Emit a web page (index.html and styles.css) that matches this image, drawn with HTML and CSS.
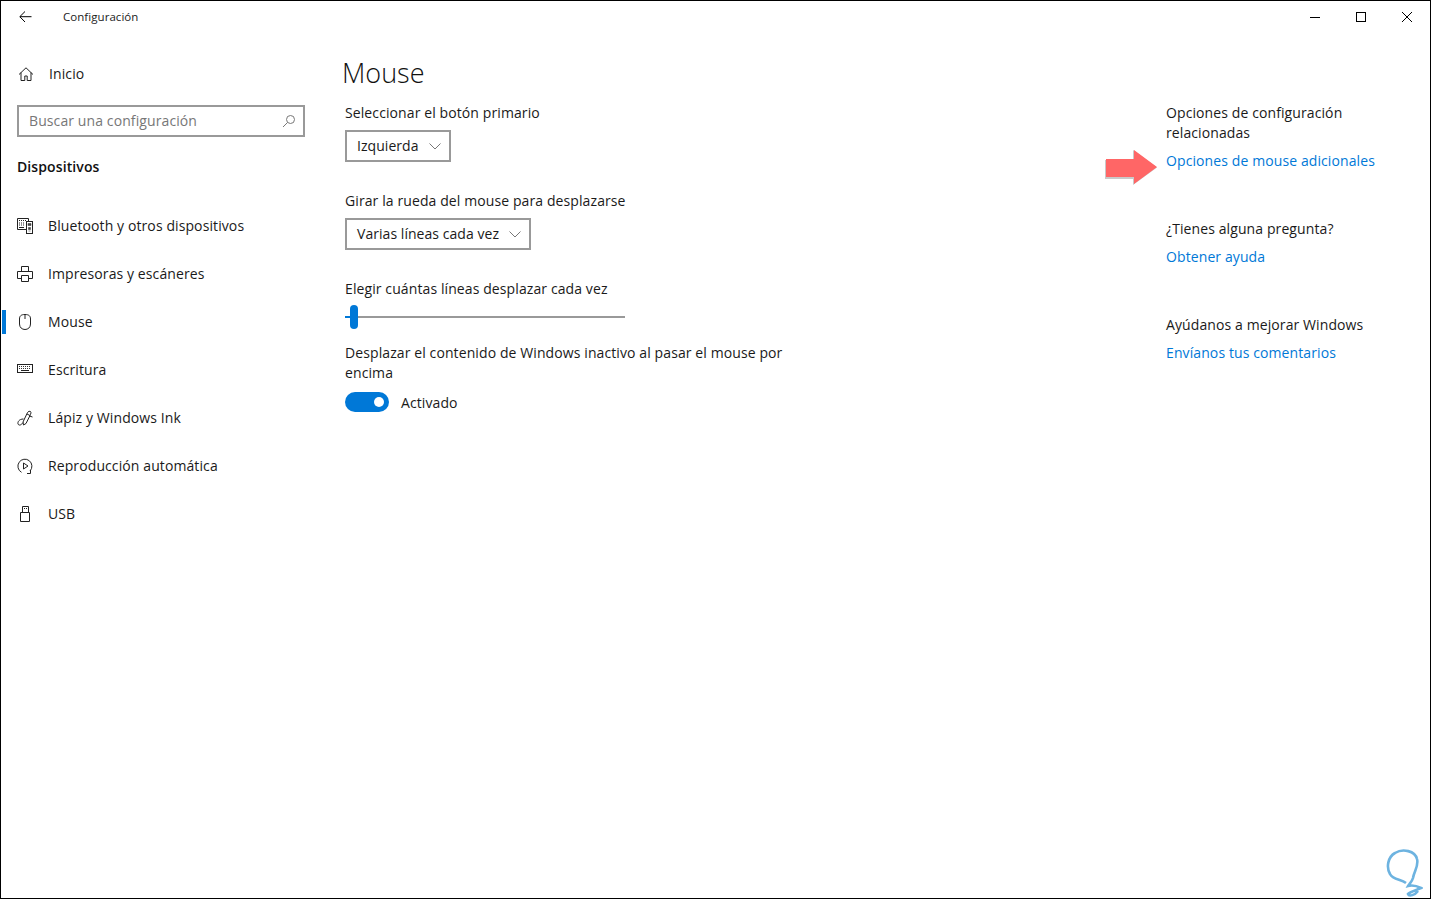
FILE: index.html
```html
<!DOCTYPE html>
<html lang="es">
<head>
<meta charset="utf-8">
<title>Configuración</title>
<link rel="stylesheet" href="styles.css">
</head>
<body>
<div class="window">
  <header class="titlebar">
    <svg class="back" width="14" height="12" viewBox="0 0 14 12"><path d="M6 .5.800 5.700 6 11M1 5.700h11.500" fill="none" stroke="#000"/></svg>
    <span class="apptitle">Configuración</span>
    <div class="controls">
      <svg width="12" height="12" viewBox="0 0 12 12"><path d="M1 6.500h10" stroke="#000"/></svg>
      <svg width="12" height="12" viewBox="0 0 12 12"><rect x="1.500" y="1.500" width="9" height="9" fill="none" stroke="#000"/></svg>
      <svg width="12" height="12" viewBox="0 0 12 12"><path d="M1 1l10 10M11 1 1 11" stroke="#000" fill="none"/></svg>
    </div>
  </header>
  <div class="content">
    <nav class="sidebar">
      <div class="home">
        <svg class="icon" width="16" height="16" viewBox="0 0 16 16"><path d="M1 8.500 8 1.800 15 8.500M3 6.500v8h3.800v-4.500h2.400v4.500H13v-8" fill="none" stroke="#222"/></svg>
        <span>Inicio</span>
      </div>
      <div class="search">
        <span>Buscar una configuración</span>
        <svg width="14" height="14" viewBox="0 0 14 14"><circle cx="8.500" cy="5.500" r="4" fill="none" stroke="#777"/><path d="M5.500 8.500 1 13" stroke="#777"/></svg>
      </div>
      <h2 class="section">Dispositivos</h2>
      <ul class="navlist">
        <li class="navitem">
          <svg class="icon" width="16" height="16" viewBox="0 0 16 16"><path d="M.5.500h11v3M9 11.500H.5V.5" fill="none" stroke="#222"/><path d="M2 2.500h1M4 2.500h1M6 2.500h1M8 2.500h1M2 5h1M4 5h1M6 5h1M2 7h1M4 7h1M6 7h1M2 9.500h5" stroke="#222"/><rect x="9.500" y="3.500" width="6" height="12" fill="none" stroke="#222"/><path d="M11 5.500h3v2h-3zM11.500 9.500h2v2h-2zM11.500 13h2" fill="#444" stroke="#444" stroke-width=".6"/></svg>
          <span>Bluetooth y otros dispositivos</span>
        </li>
        <li class="navitem">
          <svg class="icon" width="16" height="16" viewBox="0 0 16 16"><path d="M4.500 5V.5h7V5M4 12.500H.5V5.500h15v7H12M4.500 9.500h7v6h-7z" fill="none" stroke="#222"/></svg>
          <span>Impresoras y escáneres</span>
        </li>
        <li class="navitem active">
          <svg class="icon" width="16" height="16" viewBox="0 0 16 16"><path d="M8 .5C4 .5 2.500 2 2.500 5v5c0 3.500 2.500 5.500 5.500 5.500s5.500-2 5.500-5.500V5C13.500 2 12 .5 8 .5zM8 1v4" fill="none" stroke="#222"/></svg>
          <span>Mouse</span>
        </li>
        <li class="navitem">
          <svg class="icon" width="16" height="16" viewBox="0 0 16 16"><rect x=".5" y="2.500" width="15" height="8" fill="none" stroke="#222"/><path d="M2 4.500h12M2 6.500h12" stroke="#333" stroke-dasharray="1 1"/><path d="M4 8.500h8" stroke="#222"/></svg>
          <span>Escritura</span>
        </li>
        <li class="navitem">
          <svg class="icon" width="16" height="16" viewBox="0 0 16 16"><path d="M6 12 10.500 2.500Q12 .5 13.500 1.500 14.500 2.500 13.500 4.500L9 13.500 6.500 15zM10 4l3 1.500M12.500 6l3 1M6.500 9C2 9 .5 12 1 14c1 2 3.500 1 5-1.500" fill="none" stroke="#222"/></svg>
          <span>Lápiz y Windows Ink</span>
        </li>
        <li class="navitem">
          <svg class="icon" width="16" height="16" viewBox="0 0 16 16"><path d="M4.500 14.300A7 7 0 1 1 13 13" fill="none" stroke="#222"/><path d="M10 15.500h3.500V12" fill="none" stroke="#222"/><path d="M6.500 5v6l4.500-3z" fill="none" stroke="#222"/></svg>
          <span>Reproducción automática</span>
        </li>
        <li class="navitem">
          <svg class="icon" width="16" height="16" viewBox="0 0 16 16"><path d="M5.500 6V.5h6V6M3.500 6.500h9v9h-9z" fill="none" stroke="#222"/><path d="M7 2.500h1M9 2.500h1" stroke="#222"/></svg>
          <span>USB</span>
        </li>
      </ul>
    </nav>
    <main class="main">
      <h1 class="title">Mouse</h1>
      <p class="label">Seleccionar el botón primario</p>
      <div class="select">
        <span>Izquierda</span>
        <svg width="12" height="7" viewBox="0 0 12 7"><path d="M.5.500 6 6 11.500.5" fill="none" stroke="#777"/></svg>
      </div>
      <p class="label gap">Girar la rueda del mouse para desplazarse</p>
      <div class="select">
        <span>Varias líneas cada vez</span>
        <svg width="12" height="7" viewBox="0 0 12 7"><path d="M.5.500 6 6 11.500.5" fill="none" stroke="#777"/></svg>
      </div>
      <p class="label gap">Elegir cuántas líneas desplazar cada vez</p>
      <div class="slider"><span class="thumb"></span></div>
      <p class="label wrap">Desplazar el contenido de Windows inactivo al pasar el mouse por encima</p>
      <div class="toggle-row">
        <span class="toggle"><span class="knob"></span></span>
        <span class="state">Activado</span>
      </div>
    </main>
    <aside class="aside">
      <p class="label">Opciones de configuración relacionadas</p>
      <a class="link first">Opciones de mouse adicionales</a>
      <p class="label block">¿Tienes alguna pregunta?</p>
      <a class="link">Obtener ayuda</a>
      <p class="label block">Ayúdanos a mejorar Windows</p>
      <a class="link">Envíanos tus comentarios</a>
    </aside>
  </div>
  <svg class="arrow" width="54" height="38" viewBox="0 0 54 38"><path d="M1 11h28V1l24 17.500L29 36V30H1z" fill="#c9c9c9"/><path d="M2 10h28V1l23 17-23 17v-7H2z" fill="#ff6666"/></svg>
  <svg class="mark" width="38" height="51" viewBox="0 0 38 51"><path d="M21 35C16 31 8 32 5 26 1 19 3 9 10 5c8-5 20-2 22 6 2 7-3 12-4 19-1 4-4 6-5 8 4-1 9 0 13 2-4 2-10 3-13 6 1 3 7 1 10-3" fill="none" stroke="#6db3e0" stroke-width="2.600"/></svg>
</div>
</body>
</html>
```

FILE: styles.css
```css
* { box-sizing: border-box; }
html, body { margin: 0; padding: 0; }
body {
  font-family: "Open Sans", "Liberation Sans", sans-serif;
  font-size: 14px;
  line-height: 20px;
  letter-spacing: .1px;
  color: #1a1a1a;
  background: #fff;
}
.window {
  position: relative;
  width: 1431px;
  height: 899px;
  border: 1px solid #000;
  overflow: hidden;
}
.titlebar {
  display: flex;
  align-items: center;
  height: 31px;
  padding-left: 18px;
}
.back { flex: none; }
.apptitle {
  margin-left: 30px;
  font-size: 11.500px;
  letter-spacing: .05px;
  color: #222;
}
.controls {
  display: flex;
  gap: 34px;
  margin-left: auto;
  margin-right: 17px;
}
.content { display: flex; }
.sidebar {
  flex: none;
  width: 344px;
  padding-top: 32px;
}
.home {
  display: flex;
  align-items: center;
  gap: 15px;
  height: 20px;
  padding-left: 17px;
}
.search {
  display: flex;
  align-items: center;
  justify-content: space-between;
  width: 288px;
  height: 32px;
  margin: 21px 0 0 16px;
  padding: 0 7px 0 10px;
  border: 2px solid #999;
  color: #777;
}
.section {
  margin: 20px 0 0 16px;
  font-size: 14px;
  font-weight: 600;
  line-height: 20px;
  color: #111;
}
.navlist {
  margin: 25px 0 0;
  padding: 0;
  list-style: none;
}
.navitem {
  position: relative;
  display: flex;
  align-items: center;
  gap: 15px;
  height: 48px;
  padding-left: 16px;
}
.navitem.active::before {
  content: "";
  position: absolute;
  left: 1px;
  top: 12px;
  width: 4px;
  height: 24px;
  background: #0078d7;
}
.icon { flex: none; }
.main {
  flex: none;
  width: 460px;
}
.title {
  margin: 23px 0 0 -3px;
  font-size: 27px;
  font-weight: 300;
  line-height: 36px;
  letter-spacing: 0;
  color: #111;
}
.label { margin: 0; }
.main .label:first-of-type { margin-top: 12px; }
.select {
  display: inline-flex;
  align-items: center;
  gap: 10px;
  height: 32px;
  margin-top: 7px;
  padding: 0 8px 0 10px;
  border: 2px solid #999;
  letter-spacing: .05px;
  vertical-align: top;
}
.gap { margin-top: 29px; }
.slider {
  position: relative;
  width: 280px;
  height: 24px;
  margin-top: 6px;
}
.slider::before {
  content: "";
  position: absolute;
  left: 0;
  right: 0;
  top: 11px;
  height: 2px;
  background: #999;
}
.slider::after {
  content: "";
  position: absolute;
  left: 0;
  top: 11px;
  width: 6px;
  height: 2px;
  background: #0078d7;
}
.thumb {
  position: absolute;
  z-index: 1;
  left: 5px;
  top: 0;
  width: 8px;
  height: 24px;
  border-radius: 4px;
  background: #0078d7;
}
.wrap { margin-top: 14px; }
.toggle-row {
  display: flex;
  align-items: center;
  gap: 12px;
  height: 20px;
  margin-top: 9px;
}
.state { padding-top: 2px; }
.toggle {
  position: relative;
  width: 44px;
  height: 20px;
  border-radius: 10px;
  background: #0078d7;
}
.knob {
  position: absolute;
  right: 5px;
  top: 5px;
  width: 10px;
  height: 10px;
  border-radius: 50%;
  background: #fff;
}
.aside {
  flex: none;
  width: 225px;
  margin-left: 361px;
  padding-top: 71px;
}
.link {
  display: block;
  color: #0078d7;
}
.first { margin-top: 8px; }
.block { margin-top: 48px; }
.link:not(.first) { margin-top: 8px; }
.arrow {
  position: absolute;
  left: 1103px;
  top: 148px;
}
.mark {
  position: absolute;
  left: 1384px;
  top: 847px;
}
```
